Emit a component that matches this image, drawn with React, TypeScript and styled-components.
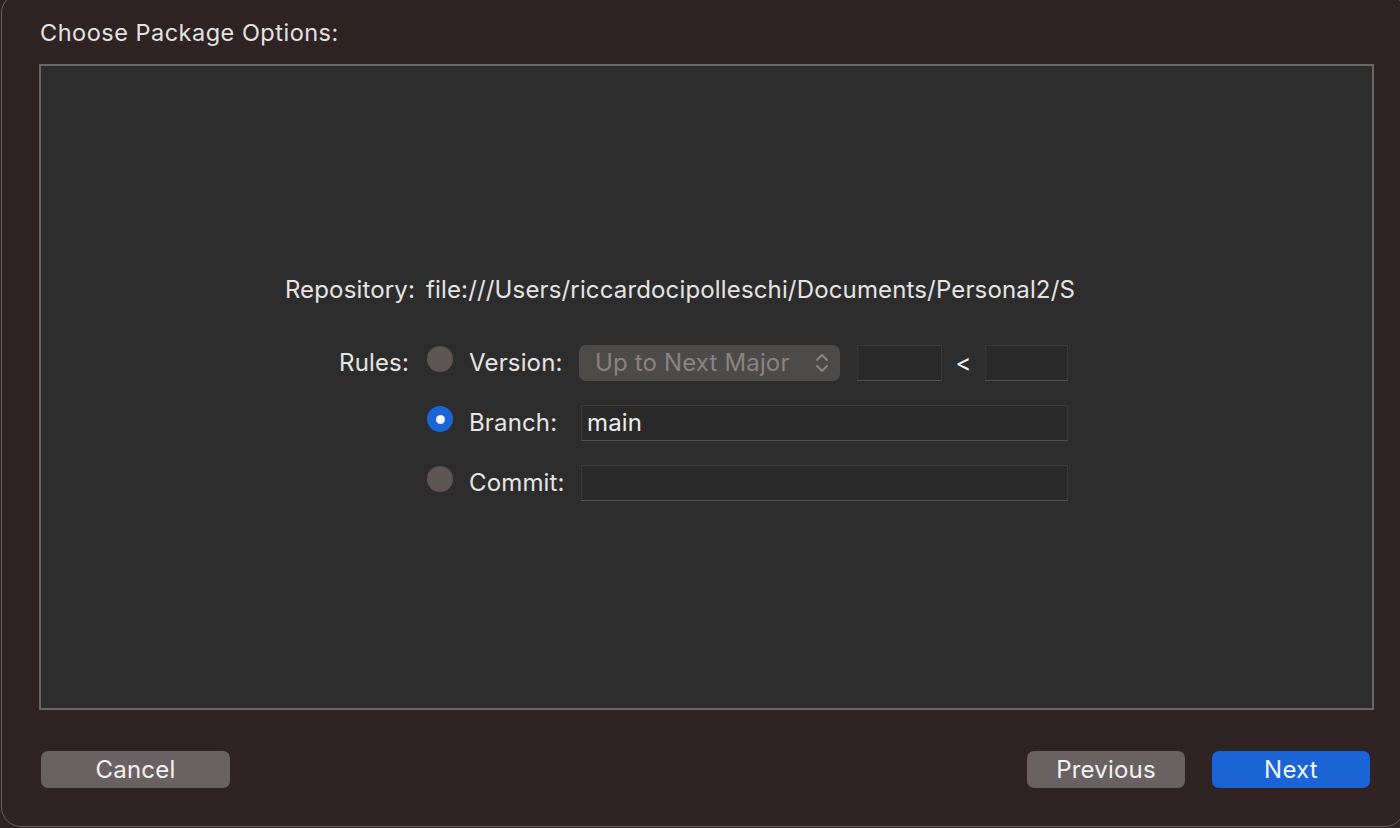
import React from "react";
import styled, { createGlobalStyle } from "styled-components";

const Global = createGlobalStyle`
  html, body { margin: 0; padding: 0; background: #2f2324; }
  body { font-family: Inter, "Liberation Sans", Arial, sans-serif; -webkit-font-smoothing: antialiased; }
  * { box-sizing: border-box; }
`;

const Screen = styled.div`
  width: 1400px;
  height: 828px;
  overflow: hidden;
  background: #2f2324;
`;

const Window = styled.div`
  width: 1404px;
  height: 834px;
  margin-top: -7px;
  margin-left: 1px;
  background: #2f2324;
  border: 1px solid #6a6161;
  border-radius: 20px;
  display: flex;
  flex-direction: column;
  padding: 0 30px 0 37px;
`;

const Title = styled.div`
  margin-top: 24px;
  height: 30px;
  line-height: 30px;
  font-size: 23.5px;
  letter-spacing: 0.5px;
  color: #e4e2e2;
  padding-left: 1px;
`;

const Panel = styled.div`
  margin-top: 16px;
  height: 646px;
  background: #2d2d2d;
  border: 2px solid #6b6665;
  display: flex;
  flex-direction: column;
  justify-content: center;
  padding-left: 243px;
  padding-bottom: 2px;
`;

const Form = styled.div`
  display: grid;
  grid-template-columns: 131px auto;
  column-gap: 11px;
  row-gap: 37px;
  align-items: start;
  font-size: 24px;
  letter-spacing: 0.15px;
  color: #e6e4e4;
`;

const Label = styled.div<{ $inset?: number }>`
  text-align: right;
  height: 36px;
  line-height: 36px;
  padding-right: ${(p) => p.$inset ?? 0}px;
  white-space: nowrap;
`;

const Value = styled.div`
  height: 36px;
  line-height: 36px;
  white-space: nowrap;
`;

const Options = styled.div`
  display: grid;
  grid-template-columns: 28px 95px auto;
  column-gap: 15px;
  row-gap: 24px;
  align-items: center;
`;

const Radio = styled.div<{ $checked?: boolean }>`
  width: 26px;
  height: 26px;
  margin-left: 1px;
  margin-top: -7px;
  border-radius: 50%;
  background: ${(p) => (p.$checked ? "#1a65d8" : "#5d5655")};
  display: flex;
  align-items: center;
  justify-content: center;
  &::after {
    content: "";
    display: ${(p) => (p.$checked ? "block" : "none")};
    width: 9px;
    height: 9px;
    border-radius: 50%;
    background: #f4f4f4;
  }
`;

const OptLabel = styled.div`
  height: 36px;
  line-height: 36px;
  white-space: nowrap;
`;

const FieldRow = styled.div`
  display: flex;
  align-items: center;
`;

const Popup = styled.div`
  width: 261px;
  height: 36px;
  border-radius: 7px;
  background: #4d4a4a;
  color: #888484;
  display: flex;
  align-items: center;
  justify-content: space-between;
  padding: 0 10px 0 16px;
  white-space: nowrap;
`;

const TextField = styled.div<{ $w: number; $ml?: number }>`
  width: ${(p) => p.$w}px;
  height: 36px;
  margin-left: ${(p) => p.$ml ?? 0}px;
  background: #2a2a2a;
  border: 1px solid #3c3a3a;
  border-bottom-color: #555252;
  color: #efeded;
  padding-left: 5px;
  line-height: 34px;
`;

const Less = styled.div`
  width: 43px;
  text-align: center;
  color: #f0f0f0;
`;

const Footer = styled.div`
  flex: 1;
  display: flex;
  align-items: flex-start;
  padding-top: 41px;
  padding-left: 2px;
  padding-right: 4px;
`;

const Spacer = styled.div`
  flex: 1;
`;

const Button = styled.button<{ $primary?: boolean; $w: number }>`
  width: ${(p) => p.$w}px;
  height: 37px;
  border: none;
  border-radius: 7px;
  background: ${(p) => (p.$primary ? "#1a64d8" : "#6a6262")};
  color: #f2f2f2;
  font-family: inherit;
  font-size: 24px;
  letter-spacing: 0.2px;
  padding: 0;
  & + & { margin-left: 27px; }
`;

const Chevrons = () => (
  <svg width="16" height="22" viewBox="0 0 16 22" fill="none" stroke="#8a8686" strokeWidth="2" strokeLinecap="round" strokeLinejoin="round">
    <path d="M3 8 L8 3 L13 8" />
    <path d="M3 14 L8 19 L13 14" />
  </svg>
);

export default function App() {
  return (
    <Screen>
      <Global />
      <Window>
        <Title>Choose Package Options:</Title>
        <Panel>
          <Form>
            <Label>Repository:</Label>
            <Value>file:///Users/riccardocipolleschi/Documents/Personal2/S</Value>
            <Label $inset={6}>Rules:</Label>
            <Options>
              <Radio />
              <OptLabel>Version:</OptLabel>
              <FieldRow>
                <Popup>
                  <span>Up to Next Major</span>
                  <Chevrons />
                </Popup>
                <TextField $w={85} $ml={17} />
                <Less>&lt;</Less>
                <TextField $w={83} />
              </FieldRow>
              <Radio $checked />
              <OptLabel>Branch:</OptLabel>
              <FieldRow>
                <TextField $w={487} $ml={2}>main</TextField>
              </FieldRow>
              <Radio />
              <OptLabel>Commit:</OptLabel>
              <FieldRow>
                <TextField $w={487} $ml={2} />
              </FieldRow>
            </Options>
          </Form>
        </Panel>
        <Footer>
          <Button $w={189}>Cancel</Button>
          <Spacer />
          <Button $w={158}>Previous</Button>
          <Button $w={158} $primary>Next</Button>
        </Footer>
      </Window>
    </Screen>
  );
}
